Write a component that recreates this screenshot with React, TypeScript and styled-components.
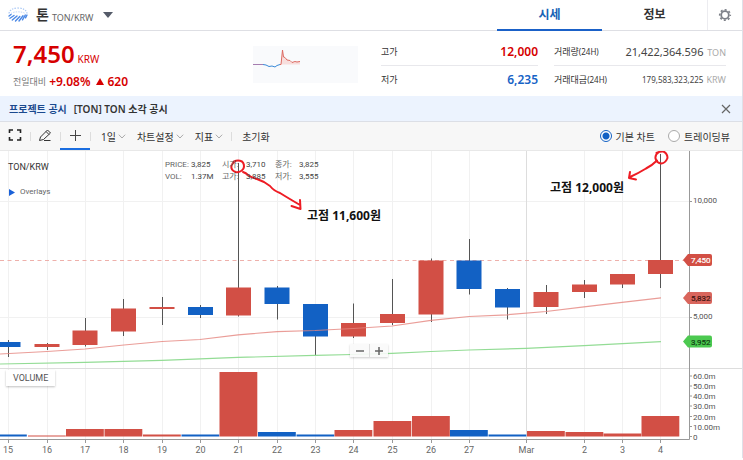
import React from "react";
import styled, { createGlobalStyle, css } from "styled-components";

const RED = "#d24f45";
const BLUE = "#1261c4";

const GlobalStyle = createGlobalStyle`
  *, *::before, *::after { box-sizing: border-box; }
  body {
    margin: 0;
    background: #fff;
    color: #333;
    font-family: "Noto Sans", "Noto Sans CJK KR", sans-serif;
    font-size: 10px;
  }
  button, input { font: inherit; color: inherit; margin: 0; }
  button { border: 0; padding: 0; background: none; cursor: pointer; }
  dl, dd, h1, p { margin: 0; }
`;

const Page = styled.main`
  border-right: 1px solid #dfe0e8;
`;

const Header = styled.header`
  display: flex;
  height: 31px;
  border-bottom: 1px solid #dedfe4;
`;

const CoinButton = styled.button`
  display: flex;
  align-items: center;
  padding: 0 8px;
  margin-right: auto;
`;

const CoinName = styled.strong`
  margin-left: 8px;
  font-size: 14px;
  font-weight: 700;
  line-height: 30px;
`;

const CoinPair = styled.span`
  margin: 4px 10px 0 3px;
  font-size: 9px;
  color: #666;
`;

const Tabs = styled.nav`
  display: flex;
  flex: 0 1 210px;
`;

const Tab = styled.a<{ $active?: boolean }>`
  flex: 1;
  height: 31px;
  line-height: 30px;
  text-align: center;
  text-decoration: none;
  font-size: 12px;
  font-weight: 700;
  color: ${(p) => (p.$active ? "#1763b6" : "#333")};
  border-bottom: 2px solid ${(p) => (p.$active ? "#1a61c8" : "transparent")};
`;

const SettingsButton = styled.button`
  display: grid;
  place-items: center;
  width: 35px;
  border-left: 1px solid #ececf0;
`;

const Summary = styled.section`
  display: flex;
  align-items: flex-start;
  height: 65px;
  padding: 0 16px 0 13px;
`;

const Price = styled.div`
  flex: 1 1 240px;
  padding-top: 7px;
  color: #d60000;
`;

const PriceLine = styled.div`
  display: flex;
  align-items: baseline;
  gap: 3px;
  line-height: 32px;
  font-size: 10px;
`;

const PriceValue = styled.strong`
  font-size: 24px;
  font-weight: 600;
`;

const ChangeLine = styled.div`
  display: flex;
  align-items: center;
  gap: 3px;
  height: 12px;
  font-size: 12px;
  font-weight: 600;
`;

const ChangeLabel = styled.span`
  font-size: 9px;
  font-weight: 400;
  color: #777;
`;

const ChangeAmount = styled.span`
  display: flex;
  align-items: center;
  gap: 3px;
  margin-left: 3px;
`;

const SparkBox = styled.div`
  flex: 0 0 105px;
  height: 37px;
  margin: 15px 23px 0 0;
  background: #f9fafc;
`;

const Stats = styled.dl<{ $basis: number }>`
  flex: 0 1 ${(p) => p.$basis}px;
  margin: 6px 0 0 0;
  & + & { margin-left: 16px; }
`;

const StatRow = styled.div`
  display: flex;
  align-items: center;
  justify-content: space-between;
  height: 28px;
  white-space: nowrap;
  & + & { border-top: 1px solid #e8e8ec; }
`;

const StatLabel = styled.dt`
  font-size: 9px;
  small { font-size: 8px; }
`;

const StatValue = styled.dd<{ $tone?: string; $small?: boolean }>`
  font-size: ${(p) => (p.$small ? 8 : p.$tone ? 12 : 11)}px;
  color: ${(p) => p.$tone || "#444"};
  font-weight: ${(p) => (p.$tone ? 600 : 400)};
  small { margin-left: 1px; font-size: 9px; color: #aaa; }
`;

const Notice = styled.section`
  display: flex;
  align-items: center;
  gap: 7px;
  height: 26px;
  padding: 0 10px 0 9px;
  background: #ecf3fe;
  border-bottom: 1px solid #dcdfe6;
  font-weight: 600;
`;

const NoticeTag = styled.strong`
  font-weight: 700;
  color: #1b4a8f;
`;

const NoticeLink = styled.a`
  margin-right: auto;
  color: inherit;
  text-decoration: none;
`;

const CloseButton = styled.button`
  display: grid;
  place-items: center;
`;

const Toolbar = styled.div`
  display: flex;
  align-items: stretch;
  height: 29px;
  padding-right: 12px;
  background: #f7f7f7;
  border-bottom: 1px solid #e8e8e8;
`;

const divider = css`
  &::before {
    content: "";
    position: absolute;
    left: 0;
    top: 10px;
    height: 9px;
    border-left: 1px solid #ddd;
  }
`;

const Tool = styled.button<{ $active?: boolean; $divided?: boolean }>`
  position: relative;
  display: grid;
  place-items: center;
  width: 30px;
  border-bottom: 2px solid ${(p) => (p.$active ? "#1a6de0" : "transparent")};
  ${(p) => p.$divided && divider}
`;

const MenuGroup = styled.div`
  position: relative;
  display: flex;
  gap: 11px;
  padding: 0 8px 0 11px;
  ${divider}
`;

const MenuButton = styled.button`
  display: flex;
  align-items: center;
  gap: 2px;
  white-space: nowrap;
`;

const ResetGroup = styled(MenuGroup)`
  margin-right: auto;
`;

const RadioLabel = styled.label`
  display: flex;
  align-items: center;
  gap: 4px;
  margin-left: 13px;
  white-space: nowrap;
`;

const Radio = styled.input`
  appearance: none;
  width: 12px;
  height: 12px;
  border: 1px solid #aaa;
  border-radius: 50%;
  background: #fff;
  &:checked {
    border-color: ${BLUE};
    background: radial-gradient(circle, ${BLUE} 3px, #fff 4px);
  }
`;

const ChartPanel = styled.section`
  position: relative;
  font-family: Roboto, "Noto Sans CJK KR", sans-serif;
  > svg { display: block; width: 100%; height: auto; }
`;

const ChartTitle = styled.div`
  position: absolute;
  left: 8px;
  top: 9px;
  font-size: 9px;
  line-height: 14px;
  color: #333;
`;

const OverlaysButton = styled.button`
  position: absolute;
  left: 9px;
  top: 35px;
  display: flex;
  align-items: center;
  gap: 5px;
  font-size: 8px;
  line-height: 12px;
  color: #666;
`;

const Quote = styled.dl`
  position: absolute;
  left: 165px;
  top: 8px;
  display: grid;
  grid-template-columns: 26px 31px 24px 29px 24px 24px;
  font-size: 8px;
  line-height: 12px;
  white-space: nowrap;
  color: #444;
  dt { color: #666; }
`;

const QuotePair = styled.div`
  display: contents;
`;

const VolumeTag = styled.div`
  position: absolute;
  left: 6px;
  top: 219px;
  padding: 0 7px;
  line-height: 16px;
  font-size: 9px;
  color: #555;
  background: #fff;
  box-shadow: 0 1px 2px rgba(0, 0, 0, 0.25);
`;

const ZoomControls = styled.div`
  position: absolute;
  left: 350px;
  top: 193px;
  display: flex;
  background: rgba(250, 250, 250, 0.9);
  box-shadow: 0 1px 2px rgba(0, 0, 0, 0.2);
`;

const ZoomButton = styled.button`
  display: grid;
  place-items: center;
  width: 19px;
  height: 13px;
  & + & { border-left: 1px solid #ddd; }
`;

const TonLogo = () => (
  <svg width="20" height="16" viewBox="0 0 20 16" fill="none">
    <path d="M1 6.500C1.500 3 5 1 10 1s8.500 2 9 5.500" stroke="#a9c8f5" strokeWidth="1.2" strokeDasharray="1.5 1.2" />
    <path d="M3 6.500C5 4.300 15 4.300 17 6.500" stroke="#c3d8f8" strokeDasharray="1.500 1" />
    <g stroke="#4a88e6" strokeWidth="1.4" strokeLinecap="round">
      <path d="M1 9 3 7.500M2 11.300 6 8.500M4.300 13 9 9M7.500 14 11.800 9.500M11 14 15 8.800M14.500 12.800 17.300 8M17.500 10.800 19 8" />
    </g>
  </svg>
);

const Gear = () => (
  <svg width="14" height="14" viewBox="0 0 14 14" fill="none" stroke="#7d8088">
    <circle cx="7" cy="7" r="3.8" strokeWidth="1.8" />
    <circle cx="7" cy="7" r="5.3" strokeWidth="1.6" strokeDasharray="2 2.16" strokeDashoffset="1" />
  </svg>
);

const Chevron = () => (
  <svg width="8" height="5" viewBox="0 0 8 5" fill="none" stroke="#aaa">
    <path d="M.8.7 4 4 7.2.7" />
  </svg>
);

type Candle = { x: number; up: boolean; top: number; bottom: number; high: number; low: number; vol: number; label?: string };

const candles: Candle[] = [
  { x: 8, up: false, top: 342, bottom: 347, high: 340, low: 357, vol: 434.5, label: "15" },
  { x: 47, up: true, top: 344, bottom: 347, high: 343, low: 350, vol: 435.5, label: "16" },
  { x: 85, up: true, top: 330.5, bottom: 345, high: 318, low: 346.5, vol: 429, label: "17" },
  { x: 123.5, up: true, top: 308.5, bottom: 331.5, high: 299, low: 336, vol: 429, label: "18" },
  { x: 162, up: true, top: 307, bottom: 309, high: 297, low: 325, vol: 434.5, label: "19" },
  { x: 200.5, up: false, top: 307, bottom: 315, high: 305, low: 318, vol: 434.5, label: "20" },
  { x: 238.5, up: true, top: 287.5, bottom: 315.5, high: 163, low: 316.5, vol: 372, label: "21" },
  { x: 277, up: false, top: 287.5, bottom: 304, high: 286, low: 319.5, vol: 432, label: "22" },
  { x: 315.5, up: false, top: 304, bottom: 336.5, high: 304, low: 355.5, vol: 434.5, label: "23" },
  { x: 353.5, up: true, top: 323, bottom: 336.5, high: 303.5, low: 338, vol: 430, label: "24" },
  { x: 392.5, up: true, top: 314, bottom: 323, high: 279, low: 325, vol: 421, label: "25" },
  { x: 431, up: true, top: 260.5, bottom: 314.5, high: 258.5, low: 322, vol: 416, label: "26" },
  { x: 469, up: false, top: 260.5, bottom: 289, high: 239, low: 294.5, vol: 430, label: "27" },
  { x: 507.5, up: false, top: 289, bottom: 307.5, high: 288, low: 319.5, vol: 434.5 },
  { x: 546, up: true, top: 292, bottom: 307, high: 285, low: 314, vol: 431 },
  { x: 584.5, up: true, top: 284.5, bottom: 292, high: 280, low: 298, vol: 432, label: "2" },
  { x: 622.5, up: true, top: 274, bottom: 284.5, high: 274, low: 288, vol: 433.5, label: "3" },
  { x: 660.5, up: true, top: 260, bottom: 274, high: 154, low: 288, vol: 416, label: "4" },
];

const volumeTicks: [string, number][] = [
  ["60.0m", 376], ["50.0m", 386], ["40.0m", 396], ["30.0m", 406], ["20.0m", 416.5], ["10.00m", 426.5], ["0", 436.5],
];

const priceTags = [
  { text: "7,450", y: 260, fill: RED, ink: "#fff" },
  { text: "5,832", y: 298, fill: "#d9655c", ink: "#401512" },
  { text: "3,952", y: 341.5, fill: "#4cc950", ink: "#123f14" },
];

const Chart = () => (
  <svg viewBox="0 151 742 307" fontFamily='Roboto, sans-serif' fontSize="8" fill="#555" role="img" aria-label="TON/KRW">
    <g stroke="#f1f1f1">
      {candles.filter((c) => c.label).map((c) => (
        <path key={c.x} d={`M${Math.floor(c.x) + 0.5} 151V439`} />
      ))}
      <path d="M0 201.5H689M0 317.5H689" />
    </g>
    <path d="M526.5 151V439" stroke="#ddd" />
    <path d="M0 368.5H742" stroke="#ddd" />
    <path d="M0 260.5H684" stroke="#eeb0ab" strokeDasharray="4 3.5" />
    {candles.map((c) => (
      <g key={c.x}>
        <path d={`M${Math.floor(c.x) + 0.5} ${c.high}V${c.low}`} stroke="#555" />
        <rect x={c.x - 12.5} y={c.top} width="25" height={c.bottom - c.top} fill={c.up ? RED : BLUE} />
        <rect x={c.x - 19} y={c.vol} width="37.8" height={436.5 - c.vol} fill={c.up ? RED : BLUE} />
      </g>
    ))}
    <path
      d="M0 354 47 351.5 85 349 124 345 162 341.5 200 339.5 238 334.8 277 331.6 315 330.5 353 328.5 392 326 431 320.3 469 316.5 507 314.8 546 311.5 584 306.8 622 302.4 661 297.8"
      fill="none" stroke="#e5857e" strokeOpacity=".8" strokeWidth="1.2"
    />
    <path
      d="M0 364 85 362.4 162 360.3 238 357.4 315 355.4 353 354.5 392 353.3 431 351.5 469 350 526 348.4 584 345.7 661 341.7"
      fill="none" stroke="#93dc95" strokeWidth="1.2"
    />
    <g stroke="#999">
      <path d="M0 439.5H689.5V151" fill="none" />
      {candles.filter((c) => c.label).map((c) => (
        <path key={c.x} d={`M${Math.floor(c.x) + 0.5} 439V443`} />
      ))}
      <path d="M526.5 439V443M689 201.5H692M689 317.5H692" />
      {volumeTicks.map(([t, y]) => <path key={t} d={`M689 ${y}H692`} />)}
    </g>
    <g textAnchor="middle" fontSize="9" fill="#666">
      {candles.filter((c) => c.label).map((c) => <text key={c.x} x={c.x} y="453">{c.label}</text>)}
      <text x="526.5" y="453">Mar</text>
    </g>
    <text x="693" y="203">10,000</text>
    <text x="693" y="319">5,000</text>
    {volumeTicks.map(([t, y]) => <text key={t} x="693" y={y + 3}>{t}</text>)}
    {priceTags.map((t) => (
      <g key={t.text}>
        <path d={`M683 ${t.y}l5-6h22q2 0 2 2v8q0 2-2 2h-22z`} fill={t.fill} />
        <text x="691" y={t.y + 3} fill={t.ink} stroke={t.ink} strokeWidth=".2">{t.text}</text>
      </g>
    ))}
    <g fill="none" stroke="#ee1c24" strokeWidth="2" strokeLinecap="round" strokeLinejoin="round">
      <path d="M234 161.5q4-2 8 0 3 3 1.5 7-3 4.500-8 3.500-5-2-4-6.500 1-3 4-4.500" />
      <path d="M243 172q3 1 5 3 4 3 9 4l7 3 6 4q4 5 10 7 8 5 20 12M300 200l.5 9-9-3" />
      <path d="M656.500 153q4-2 7-1.500 4 2 4 6.500-2 5-6 5.500-5-.5-6-5-.5-4 3-6" />
      <path d="M657 160.500q-5 5-11 8-8 5-17 9M630 172l-1 6 7 1.500" />
    </g>
    <g fontFamily='"Noto Sans", "Noto Sans CJK KR", sans-serif' fontSize="12" fontWeight="700" fill="#111">
      <text x="307" y="220">고점 11,600원</text>
      <text x="550" y="192">고점 12,000원</text>
    </g>
  </svg>
);

const quotes = [
  ["PRICE:", "3,825"], ["시가:", "3,710"], ["종가:", "3,825"],
  ["VOL:", "1.37M"], ["고가:", "3,885"], ["저가:", "3,555"],
];

export default function App() {
  return (
    <Page>
      <GlobalStyle />
      <Header>
        <CoinButton>
          <TonLogo />
          <CoinName>톤</CoinName>
          <CoinPair>TON/KRW</CoinPair>
          <svg width="10" height="6" viewBox="0 0 10 6"><path d="M0 0h10L5 6z" fill="#555b69" /></svg>
        </CoinButton>
        <Tabs>
          <Tab href="#price" $active>시세</Tab>
          <Tab href="#info">정보</Tab>
        </Tabs>
        <SettingsButton aria-label="설정"><Gear /></SettingsButton>
      </Header>

      <Summary>
        <Price>
          <PriceLine><PriceValue>7,450</PriceValue>KRW</PriceLine>
          <ChangeLine>
            <ChangeLabel>전일대비</ChangeLabel>
            +9.08%
            <ChangeAmount>
              <svg width="8" height="7" viewBox="0 0 8 7"><path d="M4 0 8 7H0z" fill="#d60000" /></svg>
              620
            </ChangeAmount>
          </ChangeLine>
        </Price>
        <SparkBox>
          <svg width="105" height="37" viewBox="0 0 105 37" fill="none">
            <path d="M28 18.500 29.500 4 30.500 11 34 14 39 16.500 47 15.500V18.500z" fill="#f8dedd" />
            <path d="M0 18.500H10" stroke="#a67db0" />
            <path d="M10 18.500 13 19 16 20.500 19 20 22 21 24 19.500 27 18.500" stroke="#3a8ad8" />
            <path d="M27 18.500H28L29.500 4 30.500 11 32 11.500 34 14 37 14.500 39 16.500 42 15.500 44 16 47 15.500" stroke="#dd6a62" />
          </svg>
        </SparkBox>
        <Stats $basis={157}>
          <StatRow><StatLabel>고가</StatLabel><StatValue $tone="#d60000">12,000</StatValue></StatRow>
          <StatRow><StatLabel>저가</StatLabel><StatValue $tone="#1763c6">6,235</StatValue></StatRow>
        </Stats>
        <Stats $basis={172}>
          <StatRow><StatLabel>거래량<small>(24H)</small></StatLabel><StatValue>21,422,364.596 <small>TON</small></StatValue></StatRow>
          <StatRow><StatLabel>거래대금<small>(24H)</small></StatLabel><StatValue $small>179,583,323,225 <small>KRW</small></StatValue></StatRow>
        </Stats>
      </Summary>

      <Notice>
        <NoticeTag>프로젝트 공시</NoticeTag>
        <NoticeLink href="#notice">[TON] TON 소각 공시</NoticeLink>
        <CloseButton aria-label="닫기">
          <svg width="12" height="10" viewBox="0 0 12 10" stroke="#666" strokeWidth="1.2"><path d="M2 1l8 8M10 1l-8 8" /></svg>
        </CloseButton>
      </Notice>

      <Toolbar>
        <Tool aria-label="전체화면">
          <svg width="14" height="12" viewBox="0 0 14 12" fill="none" stroke="#222" strokeWidth="1.6"><path d="M5 1H1.500V4M9 1h3.500V4M5 11H1.500V8M9 11h3.500V8" /></svg>
        </Tool>
        <Tool aria-label="그리기" $divided>
          <svg width="14" height="14" viewBox="0 0 14 14" fill="none" stroke="#333"><path d="M1.500 12.500 2.500 9 9.500 2 12.500 5 5.500 11.500zM8 3.500 11 6.500M6 12.500h6.500" /></svg>
        </Tool>
        <Tool aria-label="십자선" $divided $active>
          <svg width="11" height="11" viewBox="0 0 11 11" stroke="#444"><path d="M0 5.500H11M5.500 0V11" /></svg>
        </Tool>
        <MenuGroup>
          <MenuButton>1일<Chevron /></MenuButton>
          <MenuButton>차트설정<Chevron /></MenuButton>
          <MenuButton>지표<Chevron /></MenuButton>
        </MenuGroup>
        <ResetGroup><MenuButton>초기화</MenuButton></ResetGroup>
        <RadioLabel><Radio type="radio" name="chart" defaultChecked />기본 차트</RadioLabel>
        <RadioLabel><Radio type="radio" name="chart" />트레이딩뷰</RadioLabel>
      </Toolbar>

      <ChartPanel>
        <Chart />
        <ChartTitle>TON/KRW</ChartTitle>
        <OverlaysButton>
          <svg width="6" height="7" viewBox="0 0 6 7"><path d="M0 0 6 3.500 0 7z" fill="#1a61d8" /></svg>
          Overlays
        </OverlaysButton>
        <Quote>
          {quotes.map(([k, v]) => <QuotePair key={k}><dt>{k}</dt><dd>{v}</dd></QuotePair>)}
        </Quote>
        <VolumeTag>VOLUME</VolumeTag>
        <ZoomControls>
          <ZoomButton aria-label="축소"><svg width="8" height="8" viewBox="0 0 8 8" stroke="#666" strokeWidth="1.500"><path d="M0 4H8" /></svg></ZoomButton>
          <ZoomButton aria-label="확대"><svg width="8" height="8" viewBox="0 0 8 8" stroke="#666" strokeWidth="1.500"><path d="M0 4H8M4 0V8" /></svg></ZoomButton>
        </ZoomControls>
      </ChartPanel>
    </Page>
  );
}
